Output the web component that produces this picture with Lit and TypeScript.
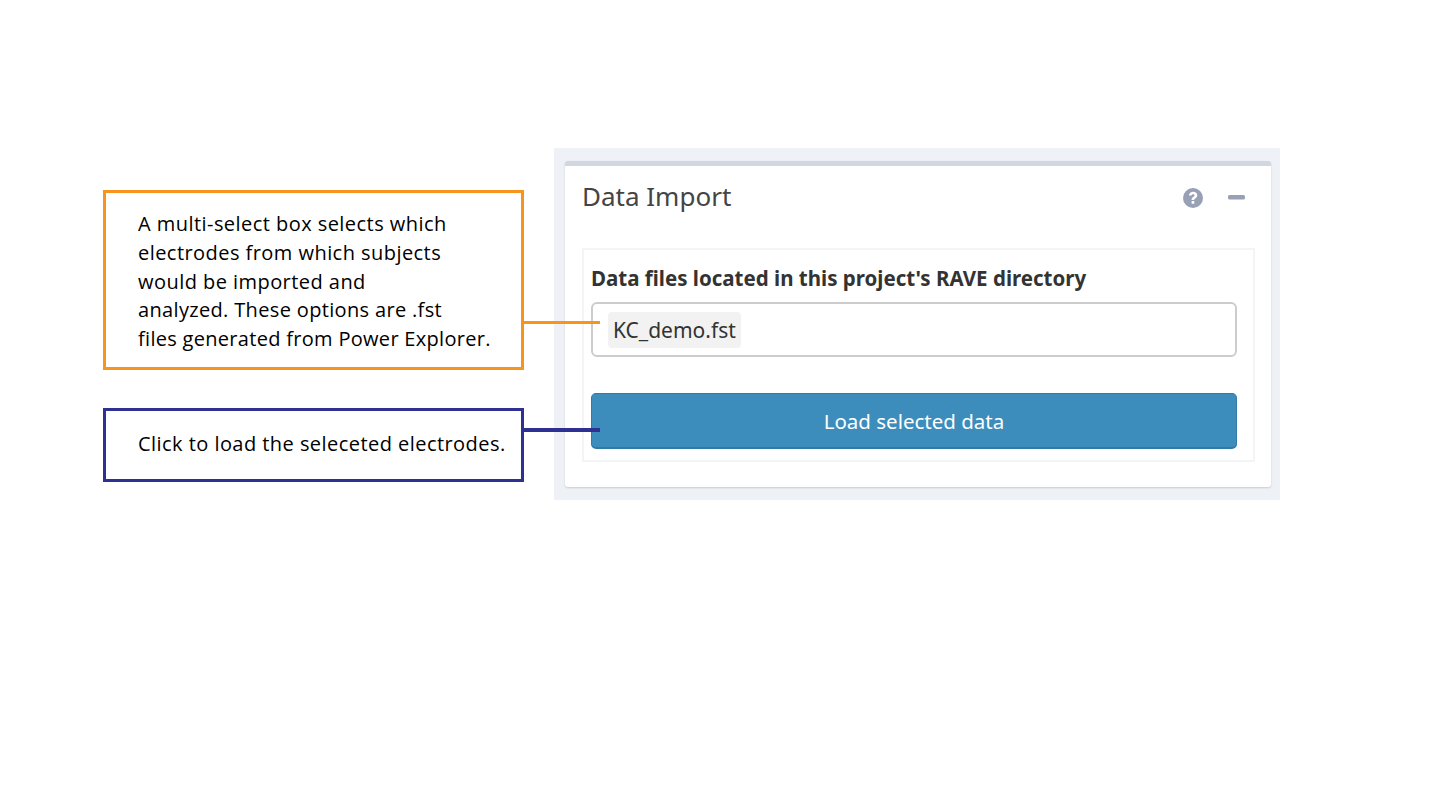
import { LitElement, html, css } from "lit";
import { customElement } from "lit/decorators.js";

@customElement("app-root")
export class AppRoot extends LitElement {
  static styles = css`
    * {
      box-sizing: border-box;
    }

    :host {
      display: block;
      position: relative;
      width: 1441px;
      height: 801px;
      background: #fff;
      overflow: hidden;
    }

    .page {
      display: flex;
      align-items: flex-start;
      gap: 30px;
      padding: 148px 0 0 103px;
    }

    /* callouts on the left */
    .notes {
      display: flex;
      flex-direction: column;
      gap: 38px;
      width: 421px;
      padding-top: 42px;
      font-family: "Open Sans", sans-serif;
      font-size: 20px;
      letter-spacing: 0.45px;
      line-height: 28.8px;
      color: #000;
    }

    .note {
      border: 3px solid;
      padding-left: 32px;
      background: #fff;
    }

    .note.orange {
      border-color: #f7941d;
      height: 180px;
      padding-top: 17px;
    }

    .note.blue {
      border-color: #2e3192;
      height: 74px;
      padding-top: 19px;
      white-space: nowrap;
    }

    .note div {
      white-space: nowrap;
    }

    .note .tight {
      letter-spacing: 0.34px;
    }

    .note .tighter {
      letter-spacing: 0.3px;
    }

    .connector {
      position: absolute;
      left: 524px;
      width: 76px;
      z-index: 2;
    }

    .connector.orange {
      top: 321px;
      height: 3px;
      background: #f7941d;
    }

    .connector.blue {
      top: 428px;
      height: 4px;
      background: #2e3192;
    }

    /* the panel on the right */
    .panel {
      width: 726px;
      height: 352px;
      padding: 13px 9px 12px 11px;
      background: #eef2f7;
      font-family: "Noto Sans", sans-serif;
    }

    .card {
      height: 326px;
      background: #fff;
      border-top: 5px solid #d2d6e0;
      border-radius: 3px;
      box-shadow: 0 1px 2px rgba(0, 0, 0, 0.16);
      padding: 0 16px 0 17px;
    }

    .card-header {
      display: flex;
      align-items: center;
      height: 82px;
      padding-bottom: 19px;
      padding-right: 10px;
    }

    .card-header h3 {
      flex: 1;
      margin: 0 0 4px;
      font-size: 26px;
      font-weight: 400;
      color: #444;
    }

    .tools {
      display: flex;
      align-items: center;
      gap: 25px;
    }

    .tools svg {
      display: block;
    }

    .well {
      height: 214px;
      border: 2px solid #f3f4f5;
      padding: 13px 16px 0 7px;
    }

    .well label {
      display: block;
      height: 39px;
      font-size: 20.5px;
      font-weight: 700;
      line-height: 30px;
      color: #333;
      white-space: nowrap;
    }

    .select {
      display: flex;
      align-items: center;
      height: 55px;
      border: 2px solid #cccccc;
      border-radius: 6px;
      padding-left: 15px;
    }

    .chip {
      display: flex;
      align-items: center;
      width: 133px;
      height: 36px;
      padding-left: 5px;
      background: #f2f2f2;
      border-radius: 4px;
      font-size: 21px;
      color: #333;
    }

    .load {
      display: block;
      width: 100%;
      height: 56px;
      margin-top: 36px;
      border: 1px solid #2e7ca6;
      border-bottom-width: 2px;
      border-radius: 5px;
      background: #3c8dbc;
      color: #fff;
      font-family: inherit;
      font-size: 20.5px;
    }
  `;

  render() {
    return html`
      <div class="page">
        <div class="notes">
          <div class="note orange">
            <div>A multi-select box selects which</div>
            <div>electrodes from which subjects</div>
            <div>would be imported and</div>
            <div class="tight">analyzed. These options are .fst</div>
            <div class="tighter">files generated from Power Explorer.</div>
          </div>
          <div class="note blue">Click to load the seleceted electrodes.</div>
        </div>
        <section class="panel">
          <div class="card">
            <div class="card-header">
              <h3>Data Import</h3>
              <div class="tools">
                <svg width="20" height="20" viewBox="0 0 20 20">
                  <circle cx="10" cy="10" r="10" fill="#97a0b5"></circle>
                  <path d="M5.9 7.5C6.2 5 8 3.8 10.2 3.8c2.3 0 4.1 1.4 4.1 3.5 0 1.6-.9 2.4-2 3.1-.8.5-1.1.9-1.1 1.6H8.6c0-1.6.6-2.4 1.6-3 .8-.5 1.3-.9 1.3-1.5 0-.7-.6-1.2-1.4-1.2-.9 0-1.4.5-1.6 1.3z" fill="#fff"></path>
                  <rect x="8.6" y="13" width="2.7" height="2.7" rx="0.3" fill="#fff"></rect>
                </svg>
                <svg width="17" height="5" viewBox="0 0 17 5">
                  <rect x="0" y="0" width="17" height="4.5" rx="1.5" fill="#97a0b5"></rect>
                </svg>
              </div>
            </div>
            <div class="well">
              <label>Data files located in this project's RAVE directory</label>
              <div class="select"><span class="chip">KC_demo.fst</span></div>
              <button class="load">Load selected data</button>
            </div>
          </div>
        </section>
      </div>
      <div class="connector orange"></div>
      <div class="connector blue"></div>
    `;
  }
}
